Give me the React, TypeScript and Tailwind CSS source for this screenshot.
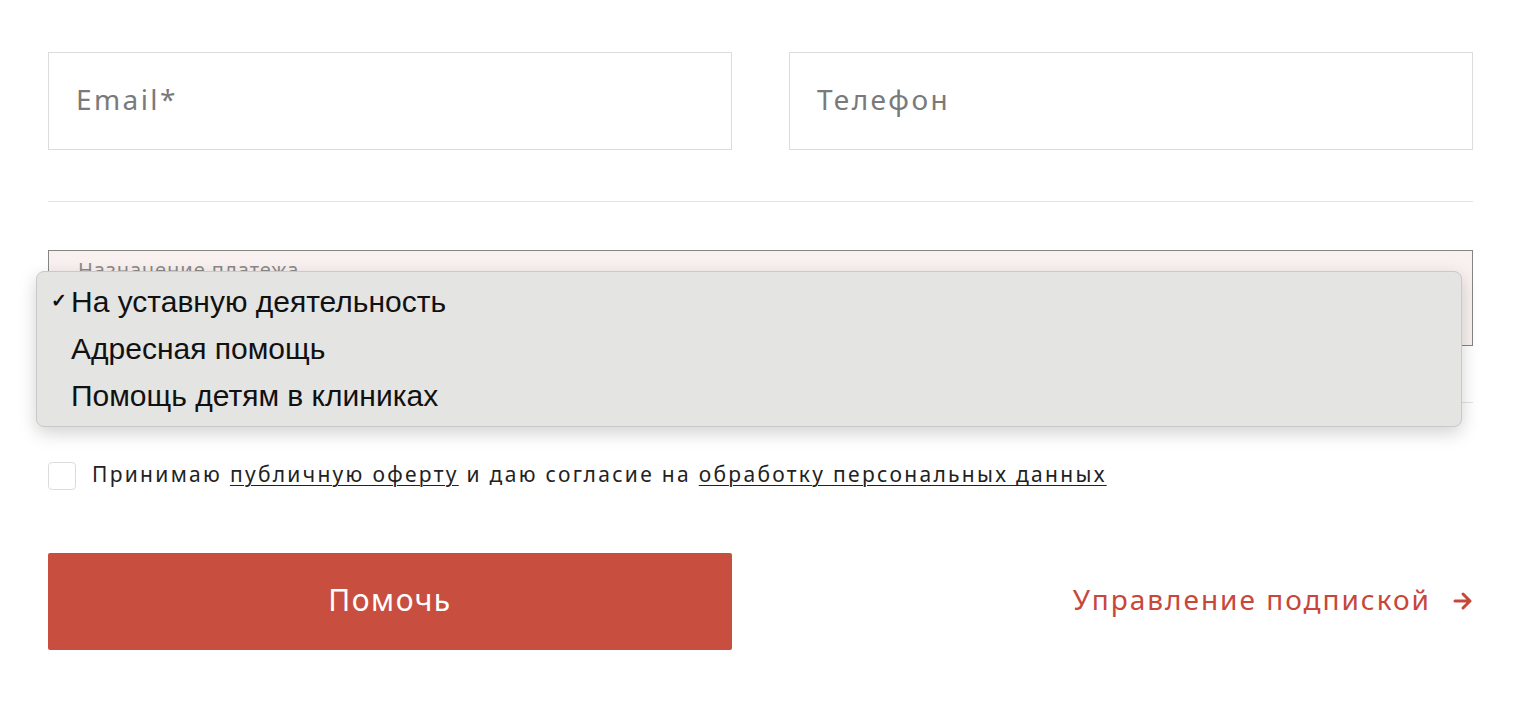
import React from "react";

export default function App() {
  return (
    <div className="min-h-[710px] bg-white pl-[48px] pr-[47px] pt-[52px] text-[#222]" style={{ fontFamily: "'Noto Sans', Lato, sans-serif" }}>
      <div className="grid grid-cols-[684px_684px] justify-between">
        <div className="flex h-[98px] items-center border border-[#dcdcdc] px-[27px] pb-[4px] text-[28px] tracking-[2.4px] text-[#7a7a7a]">Email*</div>
        <div className="flex h-[98px] items-center border border-[#dcdcdc] px-[27px] pb-[4px] text-[28px] tracking-[2.4px] text-[#7a7a7a]">Телефон</div>
      </div>
      <div className="mt-[51px] border-t border-[#e3e3e3]" />
      <div className="relative mt-[48px] h-[96px] border border-[#858585] bg-[#f8f1ef]">
        <div className="pl-[29px] pt-[4px] text-[20px] tracking-[1px] text-[#8a8a8a]">Назначение платежа</div>
        <div
          className="absolute left-[-13px] top-[20px] z-10 h-[156px] w-[1426px] rounded-[8px] border border-[#c9c9c9] bg-[#e4e4e3] pt-[6px] shadow-[0_6px_18px_rgba(0,0,0,0.18)]"
          style={{ fontFamily: "'Liberation Sans', Arial, sans-serif" }}
        >
          <div className="flex h-[47px] items-center text-[30px] text-[#111]">
            <span className="w-[34px] pl-[14px] text-[19px] font-bold">✓</span>
            <span>На уставную деятельность</span>
          </div>
          <div className="flex h-[47px] items-center pl-[34px] text-[30px] text-[#111]">Адресная помощь</div>
          <div className="flex h-[47px] items-center pl-[34px] text-[30px] text-[#111]">Помощь детям в клиниках</div>
        </div>
      </div>
      <div className="mt-[56px] border-t border-[#e3e3e3]" />
      <div className="mt-[56px] flex items-center">
        <div className="h-[28px] w-[28px] rounded-[4px] border border-[#dcdcdc] bg-white" />
        <div className="ml-[16px] pb-[2px] text-[21px] tracking-[2.3px] text-[#222]">
          Принимаю <span className="underline decoration-1 underline-offset-[3px]">публичную оферту</span> и даю согласие на{" "}
          <span className="underline decoration-1 underline-offset-[3px]">обработку персональных данных</span>
        </div>
      </div>
      <div className="mt-[60px] flex items-center justify-between">
        <div className="flex h-[97px] w-[684px] items-center justify-center rounded-[2px] bg-[#c84f3f] pb-[4px] text-[30px] tracking-[1.5px] text-white">Помочь</div>
        <div className="flex items-center gap-[22px] pb-[4px] text-[28px] tracking-[2px] text-[#c8473a]">
          <span>Управление подпиской</span>
          <svg width="20" height="20" viewBox="0 0 20 20" fill="none" stroke="#c8473a" strokeWidth="3" strokeLinecap="round" strokeLinejoin="round" className="mt-[4px]">
            <path d="M2 10h15M10 3l7 7-7 7" />
          </svg>
        </div>
      </div>
    </div>
  );
}
